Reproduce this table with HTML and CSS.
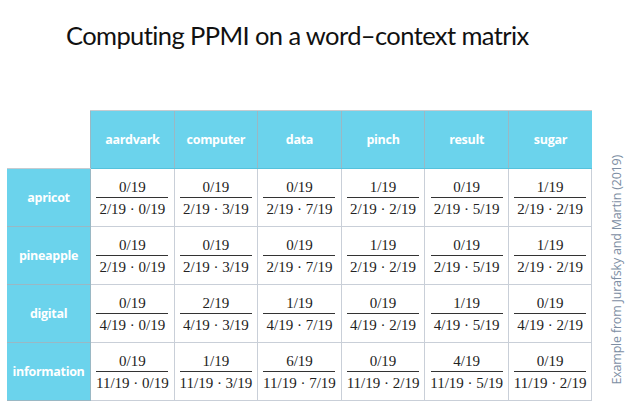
FILE: index.html
```html
<!DOCTYPE html>
<html>
<head>
<meta charset="utf-8">
<link rel="stylesheet" href="styles.css">
</head>
<body>
<div class="slide">
  <h1 class="title">Computing PPMI on a word–context matrix</h1>
  <div class="content">
    <table class="matrix">
      <colgroup>
        <col><col><col><col><col><col><col>
      </colgroup>
      <tr class="head">
        <th class="corner"></th>
        <th>aardvark</th><th>computer</th><th>data</th><th>pinch</th><th>result</th><th>sugar</th>
      </tr>
      <tr>
        <th class="rowh">apricot</th>
        <td><div class="frac"><span class="num">0/19</span><span class="den">2/19 · 0/19</span></div></td>
        <td><div class="frac"><span class="num">0/19</span><span class="den">2/19 · 3/19</span></div></td>
        <td><div class="frac"><span class="num">0/19</span><span class="den">2/19 · 7/19</span></div></td>
        <td><div class="frac"><span class="num">1/19</span><span class="den">2/19 · 2/19</span></div></td>
        <td><div class="frac"><span class="num">0/19</span><span class="den">2/19 · 5/19</span></div></td>
        <td><div class="frac"><span class="num">1/19</span><span class="den">2/19 · 2/19</span></div></td>
      </tr>
      <tr>
        <th class="rowh">pineapple</th>
        <td><div class="frac"><span class="num">0/19</span><span class="den">2/19 · 0/19</span></div></td>
        <td><div class="frac"><span class="num">0/19</span><span class="den">2/19 · 3/19</span></div></td>
        <td><div class="frac"><span class="num">0/19</span><span class="den">2/19 · 7/19</span></div></td>
        <td><div class="frac"><span class="num">1/19</span><span class="den">2/19 · 2/19</span></div></td>
        <td><div class="frac"><span class="num">0/19</span><span class="den">2/19 · 5/19</span></div></td>
        <td><div class="frac"><span class="num">1/19</span><span class="den">2/19 · 2/19</span></div></td>
      </tr>
      <tr>
        <th class="rowh">digital</th>
        <td><div class="frac"><span class="num">0/19</span><span class="den">4/19 · 0/19</span></div></td>
        <td><div class="frac"><span class="num">2/19</span><span class="den">4/19 · 3/19</span></div></td>
        <td><div class="frac"><span class="num">1/19</span><span class="den">4/19 · 7/19</span></div></td>
        <td><div class="frac"><span class="num">0/19</span><span class="den">4/19 · 2/19</span></div></td>
        <td><div class="frac"><span class="num">1/19</span><span class="den">4/19 · 5/19</span></div></td>
        <td><div class="frac"><span class="num">0/19</span><span class="den">4/19 · 2/19</span></div></td>
      </tr>
      <tr>
        <th class="rowh">information</th>
        <td><div class="frac"><span class="num">0/19</span><span class="den">11/19 · 0/19</span></div></td>
        <td><div class="frac"><span class="num">1/19</span><span class="den">11/19 · 3/19</span></div></td>
        <td><div class="frac"><span class="num">6/19</span><span class="den">11/19 · 7/19</span></div></td>
        <td><div class="frac"><span class="num">0/19</span><span class="den">11/19 · 2/19</span></div></td>
        <td><div class="frac"><span class="num">4/19</span><span class="den">11/19 · 5/19</span></div></td>
        <td><div class="frac"><span class="num">0/19</span><span class="den">11/19 · 2/19</span></div></td>
      </tr>
    </table>
    <div class="credit">Example from Jurafsky and Martin (2019)</div>
  </div>
</div>
</body>
</html>
```

FILE: styles.css
```css
html, body {
  margin: 0;
  padding: 0;
  background: #ffffff;
}

.slide {
  width: 628px;
  height: 412px;
  overflow: hidden;
}

.title {
  margin: 0;
  padding: 17px 0 0 66px;
  height: 110px;
  box-sizing: border-box;
  font-family: "Lato", "Open Sans", sans-serif;
  font-weight: 400;
  font-size: 25.5px;
  line-height: 36px;
  letter-spacing: -0.6px;
  color: #111111;
}

.content {
  display: flex;
  align-items: flex-end;
  padding-left: 7px;
}

.matrix {
  border-collapse: collapse;
  table-layout: fixed;
  width: 585px;
}

.matrix col {
  width: 83.57px;
}

.matrix th,
.matrix td {
  height: 58px;
  padding: 0;
  text-align: center;
  vertical-align: middle;
  box-sizing: border-box;
}

.head th {
  background: #6bd3ec;
  color: #ffffff;
  font-family: "Open Sans", "Noto Sans", sans-serif;
  font-weight: 700;
  font-size: 12.5px;
  letter-spacing: -0.3px;
  border-top: 1px solid #c6cbd0;
  border-left: 1px solid #9ab8c4;
  border-bottom: 1px solid #55c2dc;
}

.head th.corner {
  background: #ffffff;
  border: none;
  border-bottom: 1px solid #c6cbd0;
}

.rowh {
  background: #6bd3ec;
  color: #ffffff;
  font-family: "Open Sans", "Noto Sans", sans-serif;
  font-weight: 700;
  font-size: 12.5px;
  letter-spacing: -0.3px;
  border-bottom: 1px solid #9ab8c4;
  border-right: 1px solid #9ab8c4;
}

.matrix td {
  border: 1px solid #c9cfd8;
  background: #ffffff;
}

.frac {
  display: inline-flex;
  flex-direction: column;
  align-items: center;
  width: 72px;
  font-family: "Liberation Serif", "DejaVu Serif", serif;
  font-size: 15px;
  color: #222222;
}

.num {
  display: block;
  width: 100%;
  line-height: 16px;
  padding-bottom: 2px;
  border-bottom: 1.4px solid #333333;
}

.den {
  display: block;
  line-height: 16px;
  padding-top: 3px;
  white-space: nowrap;
}

.credit {
  writing-mode: vertical-rl;
  transform: rotate(180deg);
  margin-left: 16px;
  margin-bottom: 16px;
  font-family: "Open Sans", "Noto Sans", sans-serif;
  font-size: 12.5px;
  color: #7d8ea3;
  white-space: nowrap;
  letter-spacing: -0.2px;
}
```
